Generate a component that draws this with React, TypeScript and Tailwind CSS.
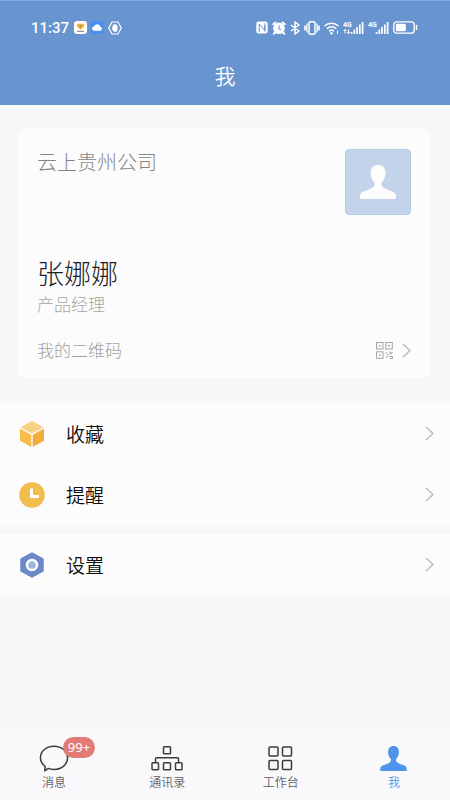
import { useState, type ReactNode } from "react";
import clsx from "clsx";

type TabId = "messages" | "contacts" | "workbench" | "me";

function StatusBar() {
  return (
    <div className="flex h-[53px] items-center justify-between pl-[31px] pr-8 text-white">
      <div className="flex items-center gap-1">
        <span className="mr-px font-['Roboto'] text-[15px] font-medium leading-5">11:37</span>
        <svg className="h-[13px] w-[13px]" viewBox="0 0 13 13" aria-hidden="true">
          <rect width="13" height="13" rx="3" fill="#fffdf6" />
          <path d="M3.6 2.8h5.8l1 2.2-3.9 3.8L2.6 5z" fill="#e3b44c" />
          <path d="M4.8 4.6h3.4L6.5 7.4z" fill="#c9962f" />
          <path d="M3 10.3h7" stroke="#8a7a66" strokeWidth="1" />
        </svg>
        <svg className="h-[13px] w-[13px]" viewBox="0 0 13 13" aria-hidden="true">
          <rect width="13" height="13" rx="3" fill="#4a8ff0" />
          <path d="M3.4 9.8a2.3 2.3 0 0 1-.2-4.6 3.3 3.3 0 0 1 6.2.6 2.1 2.1 0 0 1 .2 4z" fill="#fff" />
        </svg>
        <svg className="h-[14px] w-[14px]" viewBox="0 0 14 14" aria-hidden="true">
          <path d="M4 1h6l3.3 6L10 13H4L.7 7z" fill="none" stroke="#fff" strokeWidth="1.2" strokeLinejoin="round" />
          <path d="M4.5 6.8V4.4h1V3.6h1V3h1v.6h1v1h1v3.2c0 2-.9 3.2-2.3 3.2-1.600 0-2.200-1-3.400-3.400z" fill="#fff" />
        </svg>
      </div>

      <div className="flex items-center gap-1">
        {/* NFC */}
        <svg className="h-[13px] w-3" viewBox="0 0 12 13" aria-hidden="true">
          <rect x=".3" y=".5" width="11.4" height="12" rx="2.5" fill="#fff" />
          <path d="M3.200 11V3l5.400 6.500V4.500M9 2.300v8.200" fill="none" stroke="#6894d0" strokeWidth="1" />
        </svg>
        {/* Alarm */}
        <svg className="h-[14px] w-[14px]" viewBox="0 0 14 14" aria-hidden="true">
          <circle cx="7" cy="7.3" r="5.8" fill="#fff" />
          <path d="M1.300 3.300 3.300 1.500M12.700 3.300l-2-1.800M3 11.500l-1.200 1.300M11 11.500l1.200 1.300" stroke="#fff" strokeWidth="2" strokeLinecap="round" />
          <path d="M7 4.300v3.300l2 1.400" fill="none" stroke="#6894d0" strokeWidth="1.1" />
        </svg>
        {/* Bluetooth */}
        <svg className="h-[14px] w-[10px]" viewBox="0 0 10 14" aria-hidden="true">
          <path d="m1 4 8 6-4 3V1l4 3-8 6" fill="none" stroke="#fff" strokeWidth="1.5" strokeLinejoin="round" />
        </svg>
        {/* Vibrate */}
        <svg className="h-[14px] w-4" viewBox="0 0 16 14" aria-hidden="true">
          <rect x="5" y=".8" width="6" height="12.4" rx="1.200" fill="none" stroke="#fff" strokeWidth="1.5" />
          <path d="M3 2.500v2L2.200 6 3 7l-.8 1 .8 1.500v2M.8 4.500v5M13 2.500v2l.8 1.500-.8 1 .8 1-.8 1.500v2M15.200 4.500v5" fill="none" stroke="#fff" strokeWidth="1.300" />
        </svg>
        {/* Wi-Fi */}
        <svg className="h-[14px] w-[15px]" viewBox="0 0 15 14" aria-hidden="true">
          <path d="M.5 5a10 10 0 0 1 14 0M2.800 7.700a6.700 6.700 0 0 1 9.400 0M5 10.300a3.600 3.600 0 0 1 5 0" fill="none" stroke="#fff" strokeWidth="1.5" />
          <circle cx="7.5" cy="12.200" r="1.200" fill="#fff" />
          <path d="M13.500 9.500V13" stroke="#fff" strokeWidth="1" />
        </svg>
        <Signal withData />
        <Signal />
        {/* Battery */}
        <svg className="h-[13px] w-[25px]" viewBox="0 0 25 13" aria-hidden="true">
          <rect x=".8" y=".8" width="20.4" height="11.4" rx="3" fill="none" stroke="#fff" strokeWidth="1.3" />
          <rect x="2.8" y="2.8" width="10" height="7.4" rx="1.3" fill="#fff" />
          <path d="M23.500 4.500v4" stroke="#fff" strokeWidth="1.5" strokeLinecap="round" />
        </svg>
      </div>
    </div>
  );
}

function Signal({ withData = false }: { withData?: boolean }) {
  return (
    <svg className="h-[14px] w-[21px]" viewBox="0 0 21 14" aria-hidden="true">
      <text x="0" y="6" fill="#fff" fontSize="7" fontWeight="700" fontFamily="Roboto, sans-serif">
        4G
      </text>
      {withData && (
        <path d="M2 8.500v4M.7 10 2 8.500 3.300 10M5.500 8.500v4M4.200 11l1.300 1.500L6.800 11" fill="none" stroke="#fff" strokeWidth="1" />
      )}
      <path d="M8.500 11v2M11.300 8.500V13M14 6v7M16.800 3.500V13M19.600 1v12" stroke="#fff" strokeWidth="1.7" />
    </svg>
  );
}

function PersonIcon({ className }: { className: string }) {
  return (
    <svg className={className} viewBox="0 0 36 34" fill="currentColor" aria-hidden="true">
      <path d="M18 0c4.600 0 7.400 3.200 7.400 7.700 0 4.300-1.500 7.700-3.600 9.500-.5.500-.6 2.600 0 3.600 1.400 2.400 5.400 3.900 9.200 5.200 3.700 1.300 5 2.700 5 5.500V34H0v-2.500C0 28.700 1.300 27.300 5 26c3.800-1.300 7.800-2.800 9.200-5.200.6-1 .5-3.100 0-3.600-2.100-1.800-3.600-5.200-3.600-9.500C10.600 3.200 13.400 0 18 0z" />
    </svg>
  );
}

function Chevron() {
  return (
    <svg className="h-[15px] w-[9px]" viewBox="0 0 9 15" fill="none" stroke="#bdbdbd" strokeWidth="1.5" aria-hidden="true">
      <path d="m.8.8 7 6.700-7 6.700" />
    </svg>
  );
}

function QrIcon() {
  return (
    <svg className="h-[17px] w-[17px]" viewBox="0 0 17 17" fill="none" stroke="#a5a5a5" aria-hidden="true">
      <rect x=".5" y=".5" width="6.5" height="6.5" />
      <rect x="9.8" y=".5" width="6.5" height="6.5" />
      <rect x=".5" y="9.8" width="6.5" height="6.5" />
      <path d="M3 3.800h1.600M12.300 3.800h1.600M3 13h1.600" strokeWidth="1.6" />
      <path d="m9.800 10 2.700 3-2.700 3M13 10h1.500v2M16.500 10l-2 2.500M13.500 14.500h3v2h-2.500" />
    </svg>
  );
}

function ProfileCard() {
  return (
    <section className="ml-[17px] mr-[19px] flex flex-col rounded-lg bg-[#fcfcfc] px-5 pb-3 pt-5">
      <div className="flex items-start justify-between">
        <p className="text-[20px] font-light leading-[26px] text-[#858585]">云上贵州公司</p>
        <div className="flex h-[66px] w-[66px] items-center justify-center rounded-[4px] border border-[#b6cce5] bg-[#c3d4ea] text-[#fdfdfd]">
          <PersonIcon className="h-[34px] w-9" />
        </div>
      </div>
      <h2 className="mt-10 text-[27px] font-light leading-9 text-[#202124]">张娜娜</h2>
      <p className="mt-px text-[17px] font-light leading-6 text-[#a5a5a5]">产品经理</p>
      <button type="button" className="mt-[18px] flex h-8 items-center justify-between text-left">
        <span className="text-[17px] font-light text-[#a0a0a0]">我的二维码</span>
        <span className="flex items-center gap-[9px]">
          <QrIcon />
          <Chevron />
        </span>
      </button>
    </section>
  );
}

function MenuRow({ icon, label }: { icon: ReactNode; label: string }) {
  return (
    <button type="button" className="flex h-[61px] w-full items-center bg-[#fcfcfc] pl-[19px] pr-4 text-left">
      {icon}
      <span className="ml-[21px] flex-1 text-[19px] font-[350] leading-7 text-[#0c0c0c]">{label}</span>
      <Chevron />
    </button>
  );
}

const CubeIcon = (
  <svg className="h-[26px] w-[26px]" viewBox="0 0 26 26" aria-hidden="true">
    <path d="M13 0 24.500 6.300 13 12.600 1.500 6.300z" fill="#f9d184" />
    <path d="M1 7.600 12.300 13.800V26L1 19.700z" fill="#f6bd4d" />
    <path d="M25 7.600 13.700 13.800V26L25 19.700z" fill="#f3ad3c" />
  </svg>
);

const ClockIcon = (
  <svg className="h-[26px] w-[26px]" viewBox="0 0 26 26" aria-hidden="true">
    <circle cx="13" cy="13" r="12.8" fill="#f3bd4c" />
    <path d="M12.500 6.500v8h7.500" fill="none" stroke="#fff" strokeWidth="3" />
  </svg>
);

const SettingsIcon = (
  <svg className="h-[26px] w-[26px]" viewBox="0 0 26 26" aria-hidden="true">
    <path d="M13 1.500 23.500 7.300v11.400L13 24.500 2.500 18.700V7.300z" fill="#6c88c8" stroke="#6c88c8" strokeWidth="2.5" strokeLinejoin="round" />
    <circle cx="13" cy="13" r="5" fill="#9db5e4" stroke="#fff" strokeWidth="2.5" />
  </svg>
);

const TABS: { id: TabId; label: string; badge?: string; icon: ReactNode }[] = [
  {
    id: "messages",
    label: "消息",
    badge: "99+",
    icon: (
      <svg className="h-[27px] w-[30px]" viewBox="0 0 30 27" fill="none" stroke="currentColor" strokeWidth="1.5" strokeLinejoin="round" aria-hidden="true">
        <path d="M15 1.200c7.700 0 13.600 5 13.600 11.600S22.700 24.400 15 24.400c-2.200 0-4-.3-5.700-1l-3.600 2.400.6-4.300C3.200 19.300 1.400 16.400 1.400 12.800 1.400 6.200 7.300 1.200 15 1.200z" />
      </svg>
    ),
  },
  {
    id: "contacts",
    label: "通讯录",
    icon: (
      <svg className="h-[27px] w-8" viewBox="0 0 32 27" fill="none" stroke="currentColor" strokeWidth="1.5" aria-hidden="true">
        <rect x="12.5" y="1.8" width="7" height="7" rx=".8" />
        <rect x="1" y="17.8" width="6.5" height="7" rx=".8" />
        <rect x="12.5" y="17.8" width="7" height="7" rx=".8" />
        <rect x="24.5" y="17.8" width="6.5" height="7" rx=".8" />
        <path d="M4.500 17.800v-4q0-1 1-1h21q1 0 1 1v4" />
      </svg>
    ),
  },
  {
    id: "workbench",
    label: "工作台",
    icon: (
      <svg className="h-[27px] w-[25px]" viewBox="0 0 25 27" fill="none" stroke="currentColor" strokeWidth="1.5" aria-hidden="true">
        <rect x="1" y="2" width="9" height="9" rx="1" />
        <rect x="14.5" y="2" width="9" height="9" rx="1" />
        <rect x="1" y="15.5" width="9" height="9" rx="1" />
        <rect x="14.5" y="15.5" width="9" height="9" rx="1" />
      </svg>
    ),
  },
  {
    id: "me",
    label: "我",
    icon: <PersonIcon className="h-[25px] w-[27px]" />,
  },
];

function TabBar({ active, onChange }: { active: TabId; onChange: (id: TabId) => void }) {
  return (
    <nav className="flex justify-between bg-[#f9f9fb] pb-[9px] pl-6 pr-[26px] pt-[14px]">
      {TABS.map((tab) => (
        <button
          key={tab.id}
          type="button"
          onClick={() => onChange(tab.id)}
          className={clsx(
            "relative flex w-[60px] flex-col items-center",
            active === tab.id ? "text-[#4f94ea]" : "text-[#3c3c3f]"
          )}
        >
          <span className="flex h-7 items-center">{tab.icon}</span>
          <span className={clsx("text-[12px] font-[350] leading-[19px]", active !== tab.id && "text-[#606064]")}>{tab.label}</span>
          {tab.badge && (
            <span className="absolute -top-[7px] left-[39px] flex h-[21px] w-8 items-center justify-center rounded-full bg-[#e27b75] font-['Noto_Sans'] text-[13px] text-white">
              {tab.badge}
            </span>
          )}
        </button>
      ))}
    </nav>
  );
}

export default function App() {
  const [activeTab, setActiveTab] = useState<TabId>("me");

  return (
    <div className="flex min-h-screen flex-col bg-[#f6f7f9] font-['Noto_Sans_CJK_SC',sans-serif]">
      <header className="border-t border-[#80acdf] bg-[#6894d0] pb-[14px]">
        <StatusBar />
        <h1 className="pt-[5px] text-center text-[21px] font-[350] leading-[32px] text-white">我</h1>
      </header>

      <main className="flex flex-1 flex-col pt-6">
        <ProfileCard />
        <div className="mt-[25px] flex flex-col">
          <MenuRow icon={CubeIcon} label="收藏" />
          <MenuRow icon={ClockIcon} label="提醒" />
        </div>
        <div className="mt-[9px]">
          <MenuRow icon={SettingsIcon} label="设置" />
        </div>
      </main>

      <TabBar active={activeTab} onChange={setActiveTab} />
    </div>
  );
}
